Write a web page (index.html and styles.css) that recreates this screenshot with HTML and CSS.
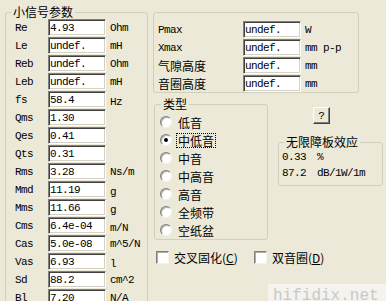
FILE: index.html
```html
<!DOCTYPE html>
<html lang="zh-CN">
<head>
    <meta charset="UTF-8">
    <title>小信号参数</title>
    <link rel="stylesheet" href="styles.css">
</head>
<body>
    <div class="window">
        <div class="group params">
            <div class="group-title">小信号参数</div>
            <div class="row"><span class="label">Re</span><input class="field" value="4.93" readonly><span class="unit">Ohm</span></div>
            <div class="row"><span class="label">Le</span><input class="field" value="undef." readonly><span class="unit">mH</span></div>
            <div class="row"><span class="label">Reb</span><input class="field" value="undef." readonly><span class="unit">Ohm</span></div>
            <div class="row"><span class="label">Leb</span><input class="field" value="undef." readonly><span class="unit">mH</span></div>
            <div class="row"><span class="label">fs</span><input class="field" value="58.4" readonly><span class="unit low">Hz</span></div>
            <div class="row"><span class="label">Qms</span><input class="field" value="1.30" readonly></div>
            <div class="row"><span class="label">Qes</span><input class="field" value="0.41" readonly></div>
            <div class="row"><span class="label">Qts</span><input class="field" value="0.31" readonly></div>
            <div class="row"><span class="label">Rms</span><input class="field" value="3.28" readonly><span class="unit">Ns/m</span></div>
            <div class="row"><span class="label">Mmd</span><input class="field" value="11.19" readonly><span class="unit low">g</span></div>
            <div class="row"><span class="label">Mms</span><input class="field" value="11.66" readonly><span class="unit low">g</span></div>
            <div class="row"><span class="label">Cms</span><input class="field" value="6.4e-04" readonly><span class="unit low">m/N</span></div>
            <div class="row"><span class="label">Cas</span><input class="field" value="5.0e-08" readonly><span class="unit">m^5/N</span></div>
            <div class="row"><span class="label">Vas</span><input class="field" value="6.93" readonly><span class="unit low">l</span></div>
            <div class="row"><span class="label">Sd</span><input class="field" value="88.2" readonly><span class="unit">cm^2</span></div>
            <div class="row"><span class="label">Bl</span><input class="field" value="7.20" readonly><span class="unit">N/A</span></div>
        </div>

        <div class="side">
            <div class="group limits">
                <div class="row"><span class="label wide">Pmax</span><input class="field" value="undef." readonly><span class="unit">W</span></div>
                <div class="row"><span class="label wide">Xmax</span><input class="field" value="undef." readonly><span class="unit">mm p-p</span></div>
                <div class="row"><span class="label wide cjk">气隙高度</span><input class="field" value="undef." readonly><span class="unit">mm</span></div>
                <div class="row"><span class="label wide cjk">音圈高度</span><input class="field" value="undef." readonly><span class="unit">mm</span></div>
            </div>

            <div class="middle">
                <div class="group types">
                    <div class="group-title">类型</div>
                    <div class="radio-row"><span class="radio"></span><span class="cjk">低音</span></div>
                    <div class="radio-row"><span class="radio checked"></span><span class="cjk focus">中低音</span></div>
                    <div class="radio-row"><span class="radio"></span><span class="cjk">中音</span></div>
                    <div class="radio-row"><span class="radio"></span><span class="cjk">中高音</span></div>
                    <div class="radio-row"><span class="radio"></span><span class="cjk">高音</span></div>
                    <div class="radio-row"><span class="radio"></span><span class="cjk">全频带</span></div>
                    <div class="radio-row"><span class="radio"></span><span class="cjk">空纸盆</span></div>
                </div>

                <div class="extra">
                    <button class="help">?</button>
                    <div class="group baffle">
                        <div class="group-title">无限障板效应</div>
                        <div class="stat"><span class="stat-value">0.33</span><span>%</span></div>
                        <div class="stat"><span class="stat-value">87.2</span><span>dB/1W/1m</span></div>
                    </div>
                </div>
            </div>

            <div class="checks">
                <label class="check first"><span class="box"></span><span class="cjk">交叉固化(<u>C</u>)</span></label>
                <label class="check"><span class="box"></span><span class="cjk">双音圈(<u>D</u>)</span></label>
            </div>
        </div>

        <div class="watermark">hifidix.net</div>
    </div>
</body>
</html>
```

FILE: styles.css
```css
* {
    box-sizing: border-box;
}
html, body {
    margin: 0;
}
body {
    background-color: #ece9d8;
    font-family: "Liberation Mono", "Noto Sans CJK SC", monospace;
    font-size: 11px;
    letter-spacing: -0.6px;
    color: #000000;
}
.window {
    position: relative;
    display: flex;
    align-items: flex-start;
    width: 386px;
    height: 301px;
    overflow: hidden;
    padding: 12px 0 0 5px;
}
.cjk {
    font-family: "Noto Sans CJK SC", sans-serif;
    font-size: 12px;
    letter-spacing: 0;
}
.group {
    display: flex;
    flex-direction: column;
    border: 1px solid #d0d0bf;
    border-radius: 3px;
}
.group-title {
    align-self: flex-start;
    height: 14px;
    line-height: 14px;
    margin: -8px 0 0 0;
    padding: 0 2px;
    background-color: #ece9d8;
    font-family: "Noto Sans CJK SC", sans-serif;
    font-size: 12px;
    letter-spacing: 0;
}
.row {
    display: flex;
    align-items: center;
    height: 17px;
    margin-bottom: 1px;
}
.label {
    width: 33px;
    flex-shrink: 0;
}
.label.wide {
    width: 85px;
}
.field {
    width: 58px;
    height: 17px;
    margin: 0;
    padding: 0 0 0 1px;
    border: 1px solid;
    border-color: #808080 #ffffff #ffffff #808080;
    box-shadow: inset 1px 1px 0 #404040, inset -1px -1px 0 #d4d0c8;
    background-color: #ffffff;
    font: inherit;
    letter-spacing: inherit;
    color: #000000;
    outline: none;
}
.unit {
    margin-left: 4px;
    white-space: nowrap;
}
.unit.low {
    padding-top: 4px;
}

/* left box */
.params {
    width: 143px;
    height: 300px;
    flex-shrink: 0;
}
.params .group-title {
    margin-left: 5px;
}
.params .row {
    padding-left: 9px;
}

/* right side */
.side {
    display: flex;
    flex-direction: column;
    margin-left: 5px;
    width: 233px;
}
.limits {
    width: 206px;
    height: 81px;
    padding: 8px 0 0 4px;
}
.middle {
    display: flex;
    align-items: flex-start;
    margin-top: 11px;
}
.types {
    width: 114px;
    margin-left: 1px;
    padding-left: 5px;
}
.types .group-title {
    margin-left: 1px;
    margin-bottom: 2px;
}
.radio-row {
    display: flex;
    align-items: center;
    gap: 5px;
    height: 18px;
}
.radio {
    position: relative;
    width: 12px;
    height: 12px;
    border-radius: 50%;
    border: 1px solid;
    border-color: #808080 #f4f3ee #f4f3ee #808080;
    box-shadow: inset 1px 1px 0 #b0ad9c;
    background-color: #ffffff;
}
.radio.checked::after {
    content: "";
    position: absolute;
    left: 3px;
    top: 3px;
    width: 4px;
    height: 4px;
    border-radius: 50%;
    background-color: #000000;
}
.radio-row .cjk {
    padding: 0 1px;
    line-height: 13px;
}
.focus {
    outline: 1px dotted #000000;
}
.extra {
    display: flex;
    flex-direction: column;
    align-items: flex-start;
    margin-left: 10px;
}
.help {
    width: 17px;
    height: 17px;
    margin: 3px 0 0 35px;
    padding: 0;
    border: 1px solid;
    border-color: #ffffff #404040 #404040 #ffffff;
    box-shadow: inset -1px -1px 0 #808080;
    background-color: #ece9d8;
    font: inherit;
    color: #000000;
}
.baffle {
    width: 105px;
    margin-top: 18px;
    padding-bottom: 4px;
}
.baffle .group-title {
    margin-left: 5px;
}
.stat {
    display: flex;
    align-items: center;
    height: 16px;
    padding-left: 3px;
}
.stat-value {
    width: 35px;
}
.checks {
    display: flex;
    align-items: center;
    margin-top: 9px;
}
.check {
    display: flex;
    align-items: center;
    gap: 5px;
}
.check.first {
    width: 98px;
    margin-left: 3px;
}
.box {
    width: 13px;
    height: 13px;
    border: 1px solid;
    border-color: #808080 #f4f3ee #f4f3ee #808080;
    box-shadow: inset 1px 1px 0 #b0ad9c;
    background-color: #ffffff;
}
.watermark {
    position: absolute;
    right: 0;
    bottom: 0;
    width: 118px;
    height: 17px;
    padding-left: 5px;
    overflow: hidden;
    background-color: #f4f3ee;
    color: #c8c8c8;
    font-size: 16px;
    line-height: 24px;
    letter-spacing: 0;
}
```
